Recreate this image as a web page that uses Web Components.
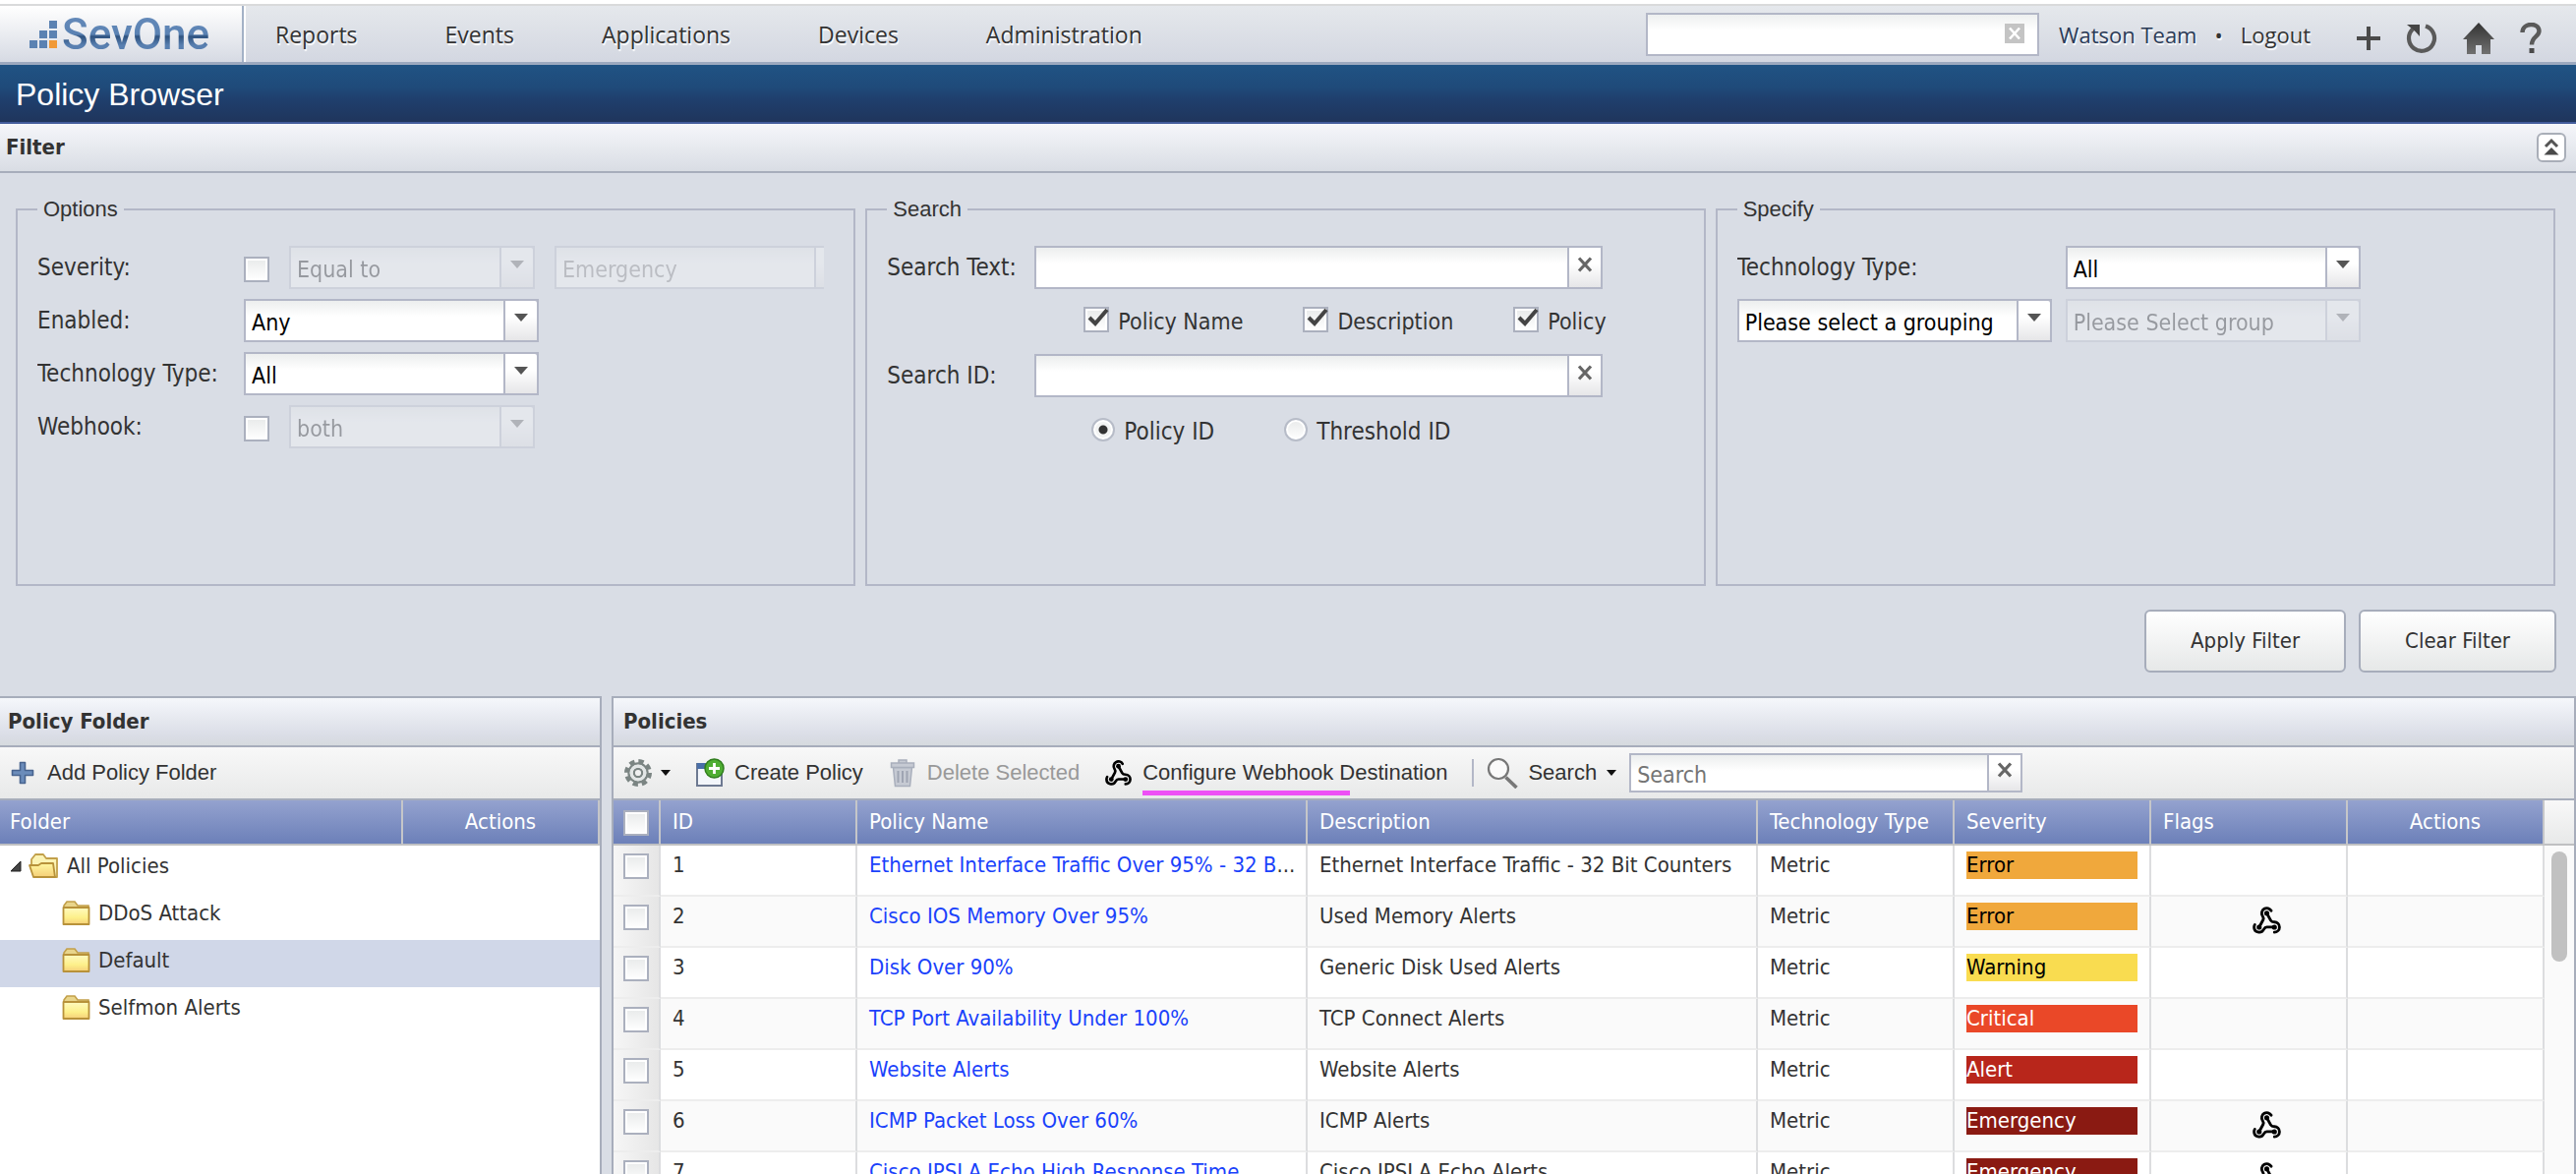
<!DOCTYPE html>
<html lang="en">
<head>
<meta charset="utf-8">
<title>Policy Browser</title>
<style>
  :root {
    --ui: "DejaVu Sans Condensed", "Noto Sans", sans-serif;
    --arial: "Liberation Sans", Arial, sans-serif;
    --nav: "Open Sans", "Noto Sans", sans-serif;
    --line: #a7adbb;
    --field-line: #b3b7c7;
    --surface: #d9dde5;
    --ink: #333;
  }
  html, body { margin: 0; height: 100%; }
  body { font: 22px/28px var(--ui); color: var(--ink); background: var(--surface); overflow: hidden; }
</style>
</head>
<body>
<policy-browser-app></policy-browser-app>

<script>
const RESET = `*{box-sizing:border-box}button,input,select{font:inherit;color:inherit;margin:0}button{background:none;border:0;padding:0}a{color:inherit;text-decoration:none}`;

function define(name, render) {
  customElements.define(name, class extends HTMLElement {
    connectedCallback() {
      if (this.shadowRoot) return;
      const root = this.attachShadow({ mode: 'open' });
      const t = document.createElement('template');
      const { css, html } = render(this);
      t.innerHTML = `<style>${RESET}${css}</style>${html}`;
      root.append(t.content.cloneNode(true));
    }
  });
}

/* ---------- icons ---------- */
const ICONS = {
  logo: [30, 30, `<g fill="#5b82b2"><path d="M0 21h8v8H0zM10 21h8v8h-8zM10 11h8v8h-8zM20 11h8v8h-8zM20 1h8v8h-8z"/></g><path fill="#f19a38" d="M20 21h8v8h-8z"/>`],
  cross: [20, 20, `<path fill="#c4c4c4" d="M0 0h20v20H0z"/><path stroke="#fff" stroke-width="2.6" d="M5 4.500l10 11M15 4.500l-10 11"/>`],
  plus: [26, 26, `<path fill="#4a4a4a" d="M11 1h4v10h10v4H15v10h-4V15H1v-4h10z"/>`],
  refresh: [34, 32, `<path fill="none" stroke="#5a5a5a" stroke-width="4.200" d="M21 3.500A13 13 0 1 1 8 6.500"/><path fill="#454545" d="M2 2h13v12l-4.500-5z"/>`],
  home: [34, 32, `<defs><linearGradient id="h" x2="0" y2="1"><stop stop-color="#333"/><stop offset="1" stop-color="#707070"/></linearGradient></defs><path fill="url(#h)" d="M17 0l16 17h-4v15h-9v-9h-6v9H5V17H1z"/>`],
  help: [24, 32, `<path fill="none" stroke="#5a5a5a" stroke-width="4.400" d="M3.500 10C3.500-.5 20.500-.5 20.500 8.500c0 6-7.500 5.500-7.500 14"/><path fill="#4a4a4a" d="M10.500 26h5v5h-5z"/>`],
  collapse: [30, 30, `<rect x="1" y="1" width="28" height="28" rx="5" fill="#fff" stroke="#a9aeb8" stroke-width="2"/><path fill="none" stroke="#555" stroke-width="3" d="M9 14l6-6 6 6"/><path fill="#4a4a4a" d="M7.500 22.500L15 15l7.500 7.500z"/>`],
  caret: [10, 8, `<path fill="#111" d="M0 1h10L5 7z"/>`],
  arrow: [16, 10, `<path fill="#555" d="M1 1h14L8 9z"/>`],
  x: [16, 18, `<path stroke="#666" stroke-width="3.200" d="M2 2.500l12 13M14 2.500l-12 13"/>`],
  add: [28, 24, `<path fill="#6b8cba" stroke="#48648f" stroke-width="1.600" stroke-linejoin="round" d="M10.500 1.500h5v8h8v5h-8v8h-5v-8h-8v-5h8z"/>`],
  gear: [30, 30, `<g fill="none" stroke="#7b8583"><circle cx="15" cy="15" r="12" stroke-width="4" stroke-dasharray="5.400 4.025"/><circle cx="15" cy="15" r="9.500" stroke-width="2.400"/><circle cx="15" cy="15" r="4.200" stroke-width="2.200"/></g><circle cx="15" cy="15" r="7" fill="none" stroke="#e2e6e6" stroke-width="3"/>`],
  create: [30, 30, `<path fill="#f3f6fb" stroke="#6d7991" stroke-width="2" d="M2 6h25v22H2z"/><path fill="#4a6fa8" d="M2 5h22v6H2z"/><circle cx="19.500" cy="10.500" r="9.500" fill="#4fae33" stroke="#2f7d1d" stroke-width="1.500"/><path stroke="#fff" stroke-width="2.800" d="M19.500 5v11M14 10.500h11"/>`],
  trash: [30, 30, `<g fill="#c6cad3" stroke="#a9afbc" stroke-width="1.500"><path d="M5.500 9.500h19l-2 19h-15z"/><path d="M3.500 5h23v4.500h-23zM11 5V2h8v3"/></g><path stroke="#9fa5b3" stroke-width="2" d="M10.500 13v12M15 13v12M19.500 13v12"/>`],
  webhook: [24, 24, `<g fill="none" stroke="#000" stroke-width="2.200" stroke-linecap="round" stroke-linejoin="round"><path d="M18 16.980h-5.990c-1.100 0-1.950.940-2.480 1.900A4 4 0 0 1 2 17c.010-.700.200-1.400.570-2"/><path d="M6 17l3.130-5.780c.530-.970.100-2.180-.500-3.100a4 4 0 1 1 6.890-4.060"/><path d="M12 6l3.130 5.730C15.660 12.700 16.900 13 18 13a4 4 0 0 1 0 8"/></g><circle cx="6" cy="17" r="2"/><circle cx="12" cy="6" r="2"/><circle cx="18" cy="17" r="2"/>`],
  search: [32, 32, `<circle cx="12" cy="12" r="10" fill="#fafafa" stroke="#777" stroke-width="2.200"/><path stroke="#777" stroke-width="3.600" d="M19.500 20.500l11 10.500"/>`],
  expander: [12, 12, `<path fill="#444" stroke="#222" d="M11 1v10H1z"/>`],
  folder: [30, 26, `<defs><linearGradient id="f" x2="0" y2="1"><stop stop-color="#fffac0"/><stop offset=".6" stop-color="#fdf08a"/><stop offset="1" stop-color="#f5cf78"/></linearGradient></defs><path fill="#e9d58b" stroke="#c2a04a" stroke-width="1.600" d="M2 22V5l3-4h8l3 4h11v17z"/><path fill="url(#f)" stroke="#b8923a" stroke-width="1.800" stroke-linejoin="round" d="M1.500 7h26v17h-26z"/>`],
  folderopen: [32, 26, `<defs><linearGradient id="o" x2="0" y2="1"><stop stop-color="#fff7a0"/><stop offset="1" stop-color="#f5cf78"/></linearGradient></defs><path fill="#fbf3b4" stroke="#c2a04a" stroke-width="1.800" stroke-linejoin="round" d="M3 13V6l4-5h8l3 4h11v19h-5z"/><path fill="url(#o)" stroke="#b8923a" stroke-width="1.800" stroke-linejoin="round" d="M1 12h9l3-2h12l2 14H5z"/>`]
};
define('sev-icon', el => {
  const [w, h, body] = ICONS[el.getAttribute('name')];
  const scale = Number(el.getAttribute('scale') || 1);
  return {
    css: `:host{display:inline-flex;flex:none}svg{display:block}`,
    html: `<svg width="${Math.round(w * scale)}" height="${Math.round(h * scale)}" viewBox="0 0 ${w} ${h}" aria-hidden="true">${body}</svg>`
  };
});

/* ---------- form controls ---------- */
define('sev-combo', el => ({
  css: `:host{display:block;flex:none}
    label{display:flex;align-items:center}
    .text{width:var(--label-width,0);line-height:44px;height:44px;flex:none;font-size:24px}
    .box{display:grid;width:var(--combo-width,300px);flex:none}
    select,.trigger{grid-area:1/1}
    select{appearance:none;height:44px;border:2px solid var(--field-line);border-radius:0;padding:4px 36px 0 6px;font-size:23px;color:#000;background:linear-gradient(#eceeee,#fff 16px);opacity:1}
    .trigger{justify-self:end;width:36px;height:44px;border:2px solid var(--field-line);border-top-right-radius:4px;background:linear-gradient(#fff 40%,#e6e6e8);display:flex;justify-content:center;padding-top:12px;pointer-events:none}
    :host([disabled]) .box{opacity:.3}
    :host([faint]) select{color:#777}`,
  html: `<label>${el.hasAttribute('label') ? `<span class="text">${el.getAttribute('label')}</span>` : ''}
    <span class="box"><select ${el.hasAttribute('name') ? `aria-label="${el.getAttribute('name')}"` : ''} ${el.hasAttribute('disabled') ? 'disabled' : ''}><option>${el.getAttribute('value')}</option></select><span class="trigger"><sev-icon name="arrow"></sev-icon></span></span></label>`
}));

define('sev-textfield', el => ({
  css: `:host{display:block;flex:none;--h:44px}
    :host([compact]){--h:40px}
    .row{display:flex}
    label{width:150px;line-height:44px;font-size:24px;flex:none}
    .box{display:flex;width:var(--field-width,578px)}
    input{flex:1;min-width:0;height:var(--h);border:2px solid var(--field-line);border-right:0;border-radius:0;padding:4px 6px 0;font-size:23px;outline:0;background:linear-gradient(#eceeee,#fff 16px)}
    input::placeholder{color:#757575}
    button{width:36px;height:var(--h);border:2px solid var(--field-line);background:linear-gradient(#fff 40%,#e6e6e8);display:flex;justify-content:center;align-items:center;padding-bottom:6px}`,
  html: `<div class="row">${el.hasAttribute('label') ? `<label for="f">${el.getAttribute('label')}</label>` : ''}
    <div class="box"><input id="f" type="text" ${el.hasAttribute('placeholder') ? `placeholder="${el.getAttribute('placeholder')}" aria-label="${el.getAttribute('placeholder')}"` : ''}><button aria-label="Clear"><sev-icon name="x"></sev-icon></button></div></div>`
}));

/* tick box or radio; the slotted text is its label */
define('sev-check', el => {
  const type = el.hasAttribute('radio') ? 'radio' : 'checkbox';
  return {
    css: `:host{display:block;flex:none;font-size:24px;line-height:44px}
      :host([trail]:not([radio])){font-size:23px}
      label{display:flex;align-items:center;gap:9px}
      :host([lead]) label{flex-direction:row-reverse;justify-content:flex-end;gap:0}
      .text{display:none}
      :host([lead]) .text{display:block;width:210px;height:44px}
      :host([trail]) .text{display:block}
      .box{display:grid;place-items:center}
      input,svg{grid-area:1/1}
      input{appearance:none;width:26px;height:26px;border:2px solid #abb0be;background:linear-gradient(#e8eaea,#fff);box-shadow:inset 0 0 0 2px #fff}
      :host([lead]) .box{padding-top:4px}
      :host([trail]) .box{padding-bottom:4px}
      input[type=radio]{border-radius:50%;width:24px;height:24px;border-color:#b7bcc8}
      input[type=radio]:checked{background:radial-gradient(circle,#333 4px,#f2f3f3 5px)}
      svg{display:none;pointer-events:none}
      input[type=checkbox]:checked+svg{display:block}`,
    html: `<label><span class="box"><input type="${type}" ${el.hasAttribute('checked') ? 'checked' : ''} ${el.hasAttribute('name') ? `aria-label="${el.getAttribute('name')}"` : ''}><svg width="26" height="26" viewBox="0 0 26 26" aria-hidden="true"><path fill="none" stroke="#444" stroke-width="4" d="M6 11l6 6L24 3"/></svg></span><span class="text"><slot></slot></span></label>`
  };
});

define('sev-button', () => ({
  css: `:host{display:block}button{height:64px;padding:0 45px;border:2px solid var(--line);border-radius:6px;background:linear-gradient(#fff,#e6e8e8)}`,
  html: `<button><slot></slot></button>`
}));

define('sev-fieldset', el => ({
  css: `:host{display:block;min-width:0}
    fieldset{margin:0;min-width:0;min-height:395px;border:2px solid var(--field-line);padding:25px 30px 20px 20px}
    legend{font:22px/24px var(--arial);padding:0 6px}
    .rows{display:flex;flex-direction:column;gap:10px;overflow:hidden}`,
  html: `<fieldset><legend>${el.getAttribute('legend')}</legend><div class="rows"><slot></slot></div></fieldset>`
}));

/* ---------- top of the page ---------- */
define('sev-topbar', () => ({
  css: `:host{display:block;border-top:4px solid #fff}
    header{display:flex;height:62px;border-top:2px solid #d9dadb;border-bottom:3px solid #9ca9bf;background:linear-gradient(#e5e8ec,#d3d7e1);font:22px/30px var(--nav);text-shadow:1px 2px 1px #fff}
    .logo{display:flex;align-items:center;width:250px;flex:none;padding-left:30px;gap:3px;border-right:2px solid #fff;box-shadow:inset -2px 0 #a3b1c6;background:linear-gradient(#fff,#d6dae3)}
    .logo b{font:500 44px/50px Roboto,sans-serif;text-shadow:none;background:linear-gradient(#6288b8 20%,#5a82b3 50%,#2e527f 54%,#587fb0 72%);background-clip:text;-webkit-background-clip:text;color:transparent}
    nav{display:flex;align-items:center;gap:89px;padding-left:30px;flex:1;font-size:23px}
    .right{display:flex;align-items:center;flex:none;padding-right:34px}
    .search{display:flex;align-items:center;width:400px;height:44px;border:2px solid var(--field-line);background:linear-gradient(#eef0f0,#fff 16px);padding-right:13px;margin-right:20px}
    input{flex:1;min-width:0;border:0;background:none;outline:0}
    .user{color:#2b3b57}
    .dot{padding:0 18px}
    .tools{display:flex;align-items:center;gap:24px;padding:8px 0 0 46px}
    .tools button{display:flex}`,
  html: `<header>
    <a class="logo" href="#"><sev-icon name="logo"></sev-icon><b>SevOne</b></a>
    <nav><a href="#">Reports</a><a href="#">Events</a><a href="#">Applications</a><a href="#">Devices</a><a href="#">Administration</a></nav>
    <div class="right">
      <div class="search"><input type="text" aria-label="Search site"><button aria-label="Clear"><sev-icon name="cross"></sev-icon></button></div>
      <a class="user" href="#">Watson Team</a><span class="dot">•</span><a href="#">Logout</a>
      <div class="tools"><button aria-label="Add"><sev-icon name="plus"></sev-icon></button><button aria-label="Refresh"><sev-icon name="refresh"></sev-icon></button><button aria-label="Home"><sev-icon name="home"></sev-icon></button><button aria-label="Help"><sev-icon name="help"></sev-icon></button></div>
    </div></header>`
}));

define('sev-titlebar', () => ({
  css: `:host{display:block}h1{margin:0;height:60px;padding-left:16px;font:32px/60px var(--arial);color:#fff;border-bottom:2px solid #435c9c;background:linear-gradient(#205384,#1f4a79 40%,#1f3f6d 60%,#1f355c)}`,
  html: `<h1><slot></slot></h1>`
}));

define('sev-filter', () => ({
  css: `:host{display:block}
    .head{display:flex;align-items:center;justify-content:space-between;height:50px;padding:0 10px 0 6px;border-bottom:2px solid var(--line);background:linear-gradient(#f5f6fa,#d9dde4)}
    .head button{display:flex}
    h2{margin:0;font-size:22px;line-height:28px}
    .sets{display:grid;grid-template-columns:repeat(3,minmax(0,1fr));gap:10px;padding:25px 21px 0 16px}
    .line{display:flex;gap:20px}
    .labels{--label-width:210px}
    .narrow{--combo-width:250px}
    .checks{height:46px;align-items:center;padding-left:200px;gap:61px}
    .radios{height:46px;align-items:center;padding:4px 0 0 208px;gap:71px}
    .specify{--label-width:334px}
    .pair{gap:14px}
    .wide{--combo-width:320px}
    .actions{display:flex;justify-content:flex-end;gap:13px;padding:24px 20px}`,
  html: `<div class="head"><h2>Filter</h2><button aria-label="Collapse"><sev-icon name="collapse"></sev-icon></button></div>
    <div class="sets">
      <sev-fieldset legend="Options">
        <div class="line"><sev-check lead>Severity:</sev-check><sev-combo class="narrow" disabled name="Comparison" value="Equal to"></sev-combo><sev-combo disabled faint name="Severity level" value="Emergency"></sev-combo></div>
        <sev-combo class="labels" label="Enabled:" value="Any"></sev-combo>
        <sev-combo class="labels" label="Technology Type:" value="All"></sev-combo>
        <div class="line"><sev-check lead>Webhook:</sev-check><sev-combo class="narrow" disabled name="Webhook state" value="both"></sev-combo></div>
      </sev-fieldset>
      <sev-fieldset legend="Search">
        <sev-textfield label="Search Text:"></sev-textfield>
        <div class="line checks"><sev-check trail checked>Policy Name</sev-check><sev-check trail checked>Description</sev-check><sev-check trail checked>Policy</sev-check></div>
        <sev-textfield label="Search ID:"></sev-textfield>
        <div class="line radios"><sev-check trail radio checked>Policy ID</sev-check><sev-check trail radio>Threshold ID</sev-check></div>
      </sev-fieldset>
      <sev-fieldset legend="Specify">
        <sev-combo class="specify" label="Technology Type:" value="All"></sev-combo>
        <div class="line pair"><sev-combo class="wide" name="Grouping" value="Please select a grouping"></sev-combo><sev-combo disabled name="Group" value="Please Select group"></sev-combo></div>
      </sev-fieldset>
    </div>
    <div class="actions"><sev-button>Apply Filter</sev-button><sev-button>Clear Filter</sev-button></div>`
}));

/* ---------- panels ---------- */
define('sev-panel', el => ({
  css: `:host{display:flex;flex-direction:column;min-width:0;min-height:0;border:2px solid var(--line);border-bottom:0;background:#fff;overflow:hidden}
    h2{margin:0;height:50px;padding-left:var(--title-pad,8px);font-size:22px;line-height:48px;border-bottom:2px solid var(--line);background:linear-gradient(#f5f7fb,#dadde6 80%,#d6dade);flex:none}
    .tools{display:flex;align-items:center;height:54px;gap:25px;padding-left:10px;border-bottom:2px solid var(--line);background:linear-gradient(#f8f8f8,#e8e9e9);flex:none}`,
  html: `<h2>${el.getAttribute('heading')}</h2><div class="tools"><slot name="tool"></slot></div><slot></slot>`
}));

define('sev-tool', el => ({
  css: `:host{display:block;flex:none}
    button{display:flex;align-items:center;gap:10px;font:22px/28px var(--arial)}
    button:disabled{color:#999}
    :host([tight]) button{gap:8px}
    .text{position:relative}
    :host([marked]) .text::after{content:"";position:absolute;left:0;bottom:-9px;width:68%;height:5px;background:#ee50f5}`,
  html: `<button ${el.hasAttribute('disabled') ? 'disabled' : ''} ${el.hasAttribute('name') ? `aria-label="${el.getAttribute('name')}"` : ''}><sev-icon name="${el.getAttribute('icon')}" scale="${el.getAttribute('scale') || 1}"></sev-icon>${el.textContent ? '<span class="text"><slot></slot></span>' : ''}${el.hasAttribute('menu') ? '<sev-icon name="caret"></sev-icon>' : ''}</button>`
}));

const HEAD_CSS = `th{height:46px;padding:0 12px;text-align:left;font-weight:400;color:#fff;border-right:2px solid #c5c6c9;border-bottom:2px solid #bfc0c2;background:linear-gradient(#94a2cf,#6c80b9);line-height:28px}
  th.c{text-align:center}`;

define('policy-tree', () => ({
  css: `:host{display:block}
    table{width:100%;border-collapse:separate;border-spacing:0;table-layout:fixed}
    ${HEAD_CSS}
    th:first-child{padding-left:10px}
    col.act{width:200px}
    td{height:48px;padding:0 0 6px 10px;line-height:28px}
    td.child{padding-left:63px}
    tr.on td{background:#d0d7e8}
    .node{display:flex;align-items:center;gap:7px}`,
  html: `<table><colgroup><col><col class="act"></colgroup><thead><tr><th>Folder</th><th class="c">Actions</th></tr></thead><tbody>
    <tr><td colspan="2"><span class="node"><sev-icon name="expander"></sev-icon><sev-icon name="folderopen"></sev-icon>All Policies</span></td></tr>
    ${['DDoS Attack', 'Default', 'Selfmon Alerts'].map(n => `<tr class="${n === 'Default' ? 'on' : ''}"><td class="child" colspan="2"><span class="node"><sev-icon name="folder"></sev-icon>${n}</span></td></tr>`).join('')}
  </tbody></table>`
}));

const NAME_LIMIT = 42;
const POLICIES = [
  [1, 'Ethernet Interface Traffic Over 95% - 32 Bit Counters', 'Ethernet Interface Traffic - 32 Bit Counters', 'Error', 0],
  [2, 'Cisco IOS Memory Over 95%', 'Used Memory Alerts', 'Error', 1],
  [3, 'Disk Over 90%', 'Generic Disk Used Alerts', 'Warning', 0],
  [4, 'TCP Port Availability Under 100%', 'TCP Connect Alerts', 'Critical', 0],
  [5, 'Website Alerts', 'Website Alerts', 'Alert', 0],
  [6, 'ICMP Packet Loss Over 60%', 'ICMP Alerts', 'Emergency', 1],
  [7, 'Cisco IPSLA Echo High Response Time', 'Cisco IPSLA Echo Alerts', 'Emergency', 1]
];
const nameCell = name => `<a href="#">${name.slice(0, NAME_LIMIT)}</a>${name.length > NAME_LIMIT ? '...' : ''}`;
define('policy-grid', () => ({
  css: `:host{display:block}
    .wrap{display:grid;grid-template-columns:minmax(0,1fr) 30px}
    table{width:100%;border-collapse:separate;border-spacing:0;table-layout:fixed}
    ${HEAD_CSS}
    col.box{width:48px}col.s{width:200px}
    th:first-child{padding:2px 10px 0}
    td{height:52px;padding:6px 6px 6px 12px;vertical-align:top;line-height:28px;border-right:2px solid #dcdddf;border-bottom:2px solid #ededed;white-space:nowrap;overflow:hidden;text-overflow:ellipsis}
    td:first-child{padding:8px 10px;background:linear-gradient(90deg,#f6f6f6,#e6e6e6)}
    tr:nth-child(even) td:not(:first-child){background:#fafafa}
    td a{color:#1a42fb}
    .sev{display:block;color:#fff;margin-right:6px}
    .Error{background:#f0a83c;color:#000}.Warning{background:#f9dc50;color:#000}.Critical{background:#ea4828}.Alert{background:#b8261b}.Emergency{background:#8a1a12}
    td.flag{padding:9px 0 0 36px;text-align:center}
    .rail{background:#fafafa}
    .cap{height:46px;border-bottom:2px solid #bfc0c2;background:linear-gradient(#f8f8f8,#e8e9e9)}
    .thumb{width:16px;height:112px;margin:6px auto 0;border-radius:8px;background:#c1c1c1}`,
  html: `<div class="wrap"><table><colgroup><col class="box"><col class="s"><col><col><col class="s"><col class="s"><col class="s"><col class="s"></colgroup>
    <thead><tr><th><sev-check name="Select all"></sev-check></th><th>ID</th><th>Policy Name</th><th>Description</th><th>Technology Type</th><th>Severity</th><th>Flags</th><th class="c">Actions</th></tr></thead>
    <tbody>${POLICIES.map(([id, name, desc, sev, hook]) => `<tr><td><sev-check name="Select ${id}"></sev-check></td><td>${id}</td><td>${nameCell(name)}</td><td>${desc}</td><td>Metric</td><td><span class="sev ${sev}">${sev}</span></td><td class="flag">${hook ? '<sev-icon name="webhook" scale="1.300"></sev-icon>' : ''}</td><td></td></tr>`).join('')}</tbody></table>
    <div class="rail"><div class="cap"></div><div class="thumb"></div></div></div>`
}));

define('policy-browser-app', () => ({
  css: `:host{display:flex;flex-direction:column;height:100vh}
    main{flex:1;min-height:0;display:grid;grid-template-columns:minmax(300px,612px) minmax(0,1fr);gap:10px}
    .left{border-left:0}
    .rule{width:2px;height:28px;background:#b3b7c7;margin-right:-12px}
    .find{--field-width:400px;margin-left:-12px}
    .right{--title-pad:10px}`,
  html: `<sev-topbar></sev-topbar><sev-titlebar>Policy Browser</sev-titlebar><sev-filter></sev-filter>
    <main>
      <sev-panel class="left" heading="Policy Folder"><sev-tool slot="tool" icon="add">Add Policy Folder</sev-tool><policy-tree></policy-tree></sev-panel>
      <sev-panel class="right" heading="Policies">
        <sev-tool slot="tool" icon="gear" name="Settings" menu tight></sev-tool>
        <sev-tool slot="tool" icon="create">Create Policy</sev-tool>
        <sev-tool slot="tool" icon="trash" disabled>Delete Selected</sev-tool>
        <sev-tool slot="tool" icon="webhook" scale="1.200" marked>Configure Webhook Destination</sev-tool>
        <span slot="tool" class="rule"></span>
        <sev-tool slot="tool" icon="search" menu>Search</sev-tool>
        <sev-textfield slot="tool" class="find" compact placeholder="Search"></sev-textfield>
        <policy-grid></policy-grid>
      </sev-panel>
    </main>`
}));
</script>
</body>
</html>
